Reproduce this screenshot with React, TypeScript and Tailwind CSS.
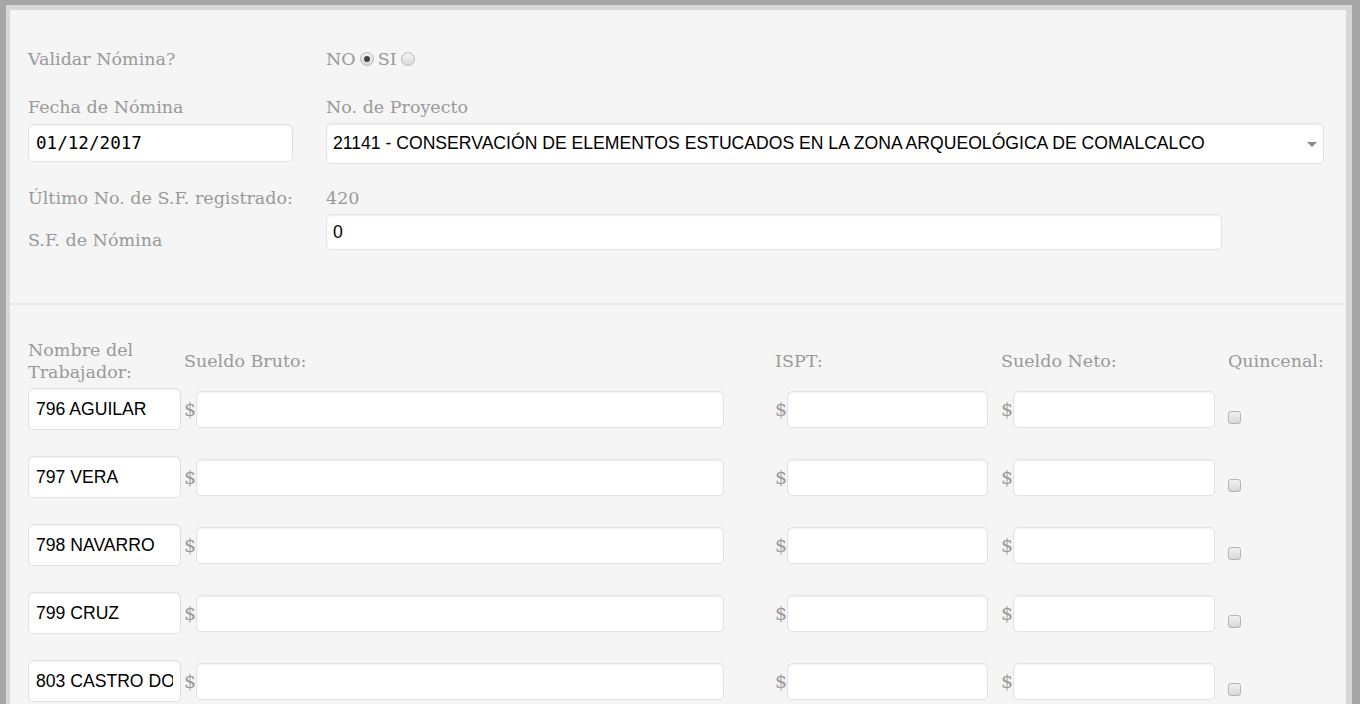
import React from 'react';

const serif = { fontFamily: "'DejaVu Serif', Georgia, serif" };
const sans = { fontFamily: "'Liberation Sans', Arial, sans-serif" };

const labelCls = 'text-[17.5px] leading-6 text-[#999] whitespace-nowrap';
const inputCls =
  'block rounded-[5px] border border-[#e2e2e2] bg-white px-[6px] text-[17.6px] text-black outline-none shadow-[inset_0_1px_2px_rgba(0,0,0,0.07)]';

const workers = ['796 AGUILAR', '797 VERA', '798 NAVARRO', '799 CRUZ', '803 CASTRO DOMINGUEZ'];

function Radio({ checked }: { checked?: boolean }) {
  return (
    <span className="mx-[4px] inline-flex h-[14px] w-[14px] items-center justify-center rounded-full border border-[#b9b9b9] bg-gradient-to-b from-[#f4f4f4] to-[#d9d9d9]">
      {checked && <span className="h-[6px] w-[6px] rounded-full bg-[#444]" />}
    </span>
  );
}

function Money({ width }: { width: string }) {
  return (
    <div className="flex items-center">
      <span className="w-[12px] text-[19px] text-[#999]" style={serif}>
        $
      </span>
      <input className={`${inputCls} h-[37px] ${width}`} style={sans} defaultValue="" />
    </div>
  );
}

export default function App() {
  return (
    <div className="h-[704px] overflow-hidden bg-[#a6a6a6] pl-[6px] pr-[8px] pt-[5px]">
      <div className="h-full border-l-[4px] border-r-[6px] border-t-[5px] border-[#d7d7d7] bg-[#f5f5f5]">
        {/* top section */}
        <div className="h-[295px] border-b-2 border-[#e6e6e6] px-[18px] pt-[37px]" style={serif}>
          <div className="flex h-6 items-center">
            <div className={`w-[298px] ${labelCls}`}>Validar Nómina?</div>
            <div className={`flex items-center ${labelCls}`}>
              NO
              <Radio checked />
              SI
              <Radio />
            </div>
          </div>

          <div className="mt-6 flex">
            <div className="w-[298px]">
              <div className={labelCls}>Fecha de Nómina</div>
              <input
                className={`${inputCls} mt-[5px] h-[38px] w-[265px] px-[7px] text-[15.5px]`}
                style={{ fontFamily: "'DejaVu Sans Mono', monospace" }}
                defaultValue="01/12/2017"
              />
            </div>
            <div>
              <div className={labelCls}>No. de Proyecto</div>
              <div className={`${inputCls} relative mt-[4px] flex h-[41px] w-[998px] items-center`} style={sans}>
                21141 - CONSERVACIÓN DE ELEMENTOS ESTUCADOS EN LA ZONA ARQUEOLÓGICA DE COMALCALCO
                <span className="absolute right-[6px] top-[18px] h-0 w-0 border-x-[5px] border-t-[5px] border-x-transparent border-t-[#8a8a8a]" />
              </div>
            </div>
          </div>

          <div className="mt-[22px] flex h-6 items-center">
            <div className={`w-[298px] ${labelCls}`}>Último No. de S.F. registrado:</div>
            <div className={labelCls}>420</div>
          </div>

          <div className="mt-[4px] flex items-start">
            <div className={`mt-[14px] w-[298px] ${labelCls}`}>S.F. de Nómina</div>
            <input className={`${inputCls} h-[36px] w-[896px]`} style={sans} defaultValue="0" />
          </div>
        </div>

        {/* workers */}
        <div className="px-[18px] pt-[34px]" style={serif}>
          <div className="grid grid-cols-[156px_591px_226px_227px_1fr] items-center">
            <div className="text-[17.5px] leading-[22px] text-[#999]">
              Nombre del
              <br />
              Trabajador:
            </div>
            <div className={labelCls}>Sueldo Bruto:</div>
            <div className={labelCls}>ISPT:</div>
            <div className={labelCls}>Sueldo Neto:</div>
            <div className={labelCls}>Quincenal:</div>
          </div>

          <div className="mt-[5px] flex flex-col gap-[26px]">
            {workers.map((w) => (
              <div key={w} className="grid h-[42px] grid-cols-[156px_591px_226px_227px_1fr] items-center">
                <input
                  className={`${inputCls} h-[42px] w-[153px] px-[7px]`}
                  style={sans}
                  defaultValue={w}
                />
                <Money width="w-[528px]" />
                <Money width="w-[201px]" />
                <Money width="w-[202px]" />
                <div className="pt-[16px]">
                  <span className="block h-[13px] w-[13px] rounded-[3px] border border-[#b5b5b5] bg-gradient-to-b from-[#f2f2f2] to-[#d6d6d6]" />
                </div>
              </div>
            ))}
          </div>
        </div>
      </div>
    </div>
  );
}
